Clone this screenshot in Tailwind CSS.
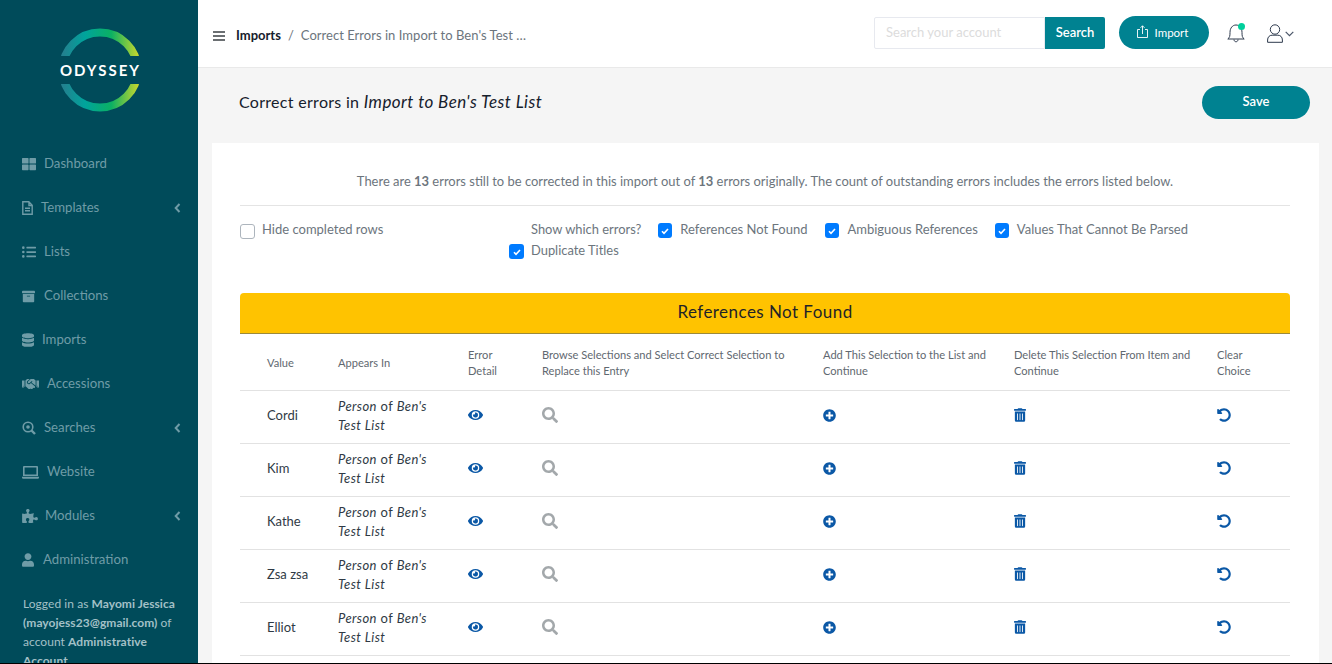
<!DOCTYPE html>
<html lang="en">
<head>
    <meta charset="UTF-8">
    <meta name="viewport" content="width=device-width, initial-scale=1.0">
    <title>Correct Errors</title>
    <script src="https://cdn.jsdelivr.net/npm/@tailwindcss/browser@4"></script>
</head>
<body class="bg-[#f5f5f5] font-['Lato',sans-serif] antialiased overflow-hidden">
<div class="flex flex-col h-[664px] w-[1332px] overflow-hidden">
<div class="flex flex-1 min-h-0">

    <!-- sidebar -->
    <aside class="w-[198px] shrink-0 bg-[#004b5a] h-full overflow-hidden text-[#6f9ca7] text-[13.2px]">
        <div class="h-[142px] flex justify-center">
            <svg class="mt-[28px] ml-[1px] h-[84px]" width="84" height="84" viewBox="0 0 84 84">
                <defs>
                    <linearGradient id="ring" x1="0" y1="0" x2="1" y2="0">
                        <stop offset="0" stop-color="#23808f"/>
                        <stop offset="0.3" stop-color="#00a49c"/>
                        <stop offset="0.65" stop-color="#0bb063"/>
                        <stop offset="1" stop-color="#c0d62f"/>
                    </linearGradient>
                    <clipPath id="cut"><path d="M0 0H84V28H0ZM0 56H84V84H0Z"/></clipPath>
                </defs>
                <circle cx="42" cy="42" r="37.500" fill="none" stroke="url(#ring)" stroke-width="8" clip-path="url(#cut)"/>
                <text x="42.500" y="47.500" text-anchor="middle" fill="#fff" font-size="15" font-weight="700" letter-spacing="2" font-family="Lato">ODYSSEY</text>
            </svg>
        </div>
        <nav>
            <a class="h-[44px] flex items-center pl-[22px] gap-[8px]"><svg class="w-[14px] h-[14px] fill-current" viewBox="0 0 512 512"><path d="M296 32h192c13.255 0 24 10.745 24 24v160c0 13.255-10.745 24-24 24H296c-13.255 0-24-10.745-24-24V56c0-13.255 10.745-24 24-24zm-80 0H24C10.745 32 0 42.745 0 56v160c0 13.255 10.745 24 24 24h192c13.255 0 24-10.745 24-24V56c0-13.255-10.745-24-24-24zM0 296v160c0 13.255 10.745 24 24 24h192c13.255 0 24-10.745 24-24V296c0-13.255-10.745-24-24-24H24c-13.255 0-24 10.745-24 24zm296 184h192c13.255 0 24-10.745 24-24V296c0-13.255-10.745-24-24-24H296c-13.255 0-24 10.745-24 24v160c0 13.255 10.745 24 24 24z"/></svg>Dashboard</a>
            <a class="h-[44px] flex items-center pl-[22px] gap-[8px] relative"><svg class="w-[11px] h-[14px]" viewBox="0 0 11 14" fill="none" stroke="currentColor" stroke-width="1.400"><path d="M.8.8h6l3.400 3.400v9H.8zM7 1v3.500h3.200M3 7.200h5M3 9.700h5"/></svg>Templates<svg class="absolute left-[174px] w-[7px] h-[10px]" viewBox="0 0 7 10" fill="none" stroke="currentColor" stroke-width="2"><path d="M5.500 1 1.700 5l3.800 4"/></svg></a>
            <a class="h-[44px] flex items-center pl-[22px] gap-[8px]"><svg class="w-[14px] h-[14px] fill-current" viewBox="0 0 512 512"><path d="M48 48a48 48 0 1 0 48 48 48 48 0 0 0-48-48zm0 160a48 48 0 1 0 48 48 48 48 0 0 0-48-48zm0 160a48 48 0 1 0 48 48 48 48 0 0 0-48-48zm448 16H176a16 16 0 0 0-16 16v32a16 16 0 0 0 16 16h320a16 16 0 0 0 16-16v-32a16 16 0 0 0-16-16zm0-320H176a16 16 0 0 0-16 16v32a16 16 0 0 0 16 16h320a16 16 0 0 0 16-16V80a16 16 0 0 0-16-16zm0 160H176a16 16 0 0 0-16 16v32a16 16 0 0 0 16 16h320a16 16 0 0 0 16-16v-32a16 16 0 0 0-16-16z"/></svg>Lists</a>
            <a class="h-[44px] flex items-center pl-[22px] gap-[9px]"><svg class="w-[13px] h-[13px] fill-current" viewBox="0 0 512 512"><path d="M32 448c0 17.700 14.300 32 32 32h384c17.700 0 32-14.300 32-32V160H32v288zm160-212c0-6.600 5.400-12 12-12h104c6.600 0 12 5.400 12 12v8c0 6.600-5.400 12-12 12H204c-6.600 0-12-5.400-12-12v-8zM480 32H32C14.300 32 0 46.300 0 64v48c0 8.800 7.200 16 16 16h480c8.800 0 16-7.200 16-16V64c0-17.700-14.300-32-32-32z"/></svg>Collections</a>
            <a class="h-[44px] flex items-center pl-[22px] gap-[8px]"><svg class="w-[12px] h-[14px] fill-current" viewBox="0 0 448 512"><path d="M448 73.143v45.714C448 159.143 347.667 192 224 192S0 159.143 0 118.857V73.143C0 32.857 100.333 0 224 0s224 32.857 224 73.143zM448 176v102.857C448 319.143 347.667 352 224 352S0 319.143 0 278.857V176c48.125 33.143 136.208 48.572 224 48.572S399.874 209.143 448 176zm0 160v102.857C448 479.143 347.667 512 224 512S0 479.143 0 438.857V336c48.125 33.143 136.208 48.572 224 48.572S399.874 369.143 448 336z"/></svg>Imports</a>
            <a class="h-[44px] flex items-center pl-[22px] gap-[8px]"><svg class="w-[17px] h-[14px] fill-current" viewBox="0 0 640 512"><path d="M434.700 64h-85.900c-8 0-15.700 3-21.600 8.400l-98.300 90c-.1.100-.2.300-.3.400-16.600 15.600-16.300 40.500-2.100 56 12.700 13.900 39.400 17.600 56.100 2.700.1-.1.300-.1.400-.2l79.900-73.200c6.500-5.900 16.700-5.500 22.600 1 6 6.500 5.500 16.600-1 22.600l-26.100 23.900L504 313.800c2.900 2.400 5.500 5 7.900 7.700V128l-54.600-54.600c-5.900-6-14.100-9.400-22.600-9.400zM544 128.200v223.900c0 17.700 14.300 32 32 32h64V128.200h-96zm48 223.900c-8.800 0-16-7.200-16-16s7.200-16 16-16 16 7.200 16 16-7.200 16-16 16zM0 384h64c17.700 0 32-14.300 32-32V128.200H0V384zm48-63.900c8.800 0 16 7.200 16 16s-7.200 16-16 16-16-7.200-16-16c0-8.900 7.200-16 16-16zm435.900 18.600L334.600 217.500l-30 27.500c-29.700 27.100-75.200 24.500-101.700-4.400-26.900-29.400-24.800-74.900 4.400-101.700L289.100 64h-83.800c-8.500 0-16.600 3.400-22.600 9.400L128 128v223.900h18.300l90.500 81.900c27.400 22.300 67.700 18.100 90-9.300l.2-.2 17.900 15.500c15.900 13 39.400 10.500 52.300-5.400l31.400-38.600 5.400 4.400c13.700 11.100 33.900 9.100 45-4.700l9.500-11.700c11.200-13.800 9.100-33.900-4.600-45.100z"/></svg>Accessions</a>
            <a class="h-[44px] flex items-center pl-[22px] gap-[8px] relative"><svg class="w-[14px] h-[14px]" viewBox="0 0 14 14" fill="none" stroke="currentColor"><circle cx="6" cy="6" r="4.800" stroke-width="1.600"/><circle cx="6" cy="6" r="1.800" fill="currentColor" stroke="none"/><path d="m9.500 9.500 3.500 3.500" stroke-width="2.400"/></svg>Searches<svg class="absolute left-[174px] w-[7px] h-[10px]" viewBox="0 0 7 10" fill="none" stroke="currentColor" stroke-width="2"><path d="M5.500 1 1.700 5l3.800 4"/></svg></a>
            <a class="h-[44px] flex items-center pl-[22px] gap-[8px]"><svg class="w-[17px] h-[13px]" viewBox="0 0 17 13"><path fill="currentColor" d="M2 0h13a1 1 0 0 1 1 1v9H1V1a1 1 0 0 1 1-1zm.6 1.600v6.800h11.800V1.600zM0 10.800h17v.7a1.300 1.300 0 0 1-1.300 1.300H1.300A1.300 1.300 0 0 1 0 11.500z"/></svg>Website</a>
            <a class="h-[44px] flex items-center pl-[22px] gap-[7px] relative"><svg class="w-[16px] h-[14px] fill-current" viewBox="0 0 576 512"><path d="M519.442 288.651c-41.519 0-59.5 31.593-82.058 31.593C377.409 320.244 432 144 432 144s-196.288 80-196.288-3.297c0-35.827 36.288-46.25 36.288-85.985C272 19.216 243.885 0 210.539 0c-34.654 0-66.366 18.891-66.366 56.346 0 41.364 31.711 59.277 31.711 81.75C175.885 207.719 0 166.758 0 166.758v333.237s178.635 41.047 178.635-28.662c0-22.473-40-40.107-40-81.471 0-37.456 29.25-56.346 63.577-56.346 33.673 0 61.788 19.216 61.788 54.717 0 39.735-36.288 50.158-36.288 85.985 0 60.803 129.675 25.73 181.23 25.73 0 0-34.725-120.101 25.827-120.101 35.962 0 46.423 36.152 86.308 36.152C556.712 416 576 387.99 576 354.443c0-34.199-18.962-65.792-56.558-65.792z"/></svg>Modules<svg class="absolute left-[174px] w-[7px] h-[10px]" viewBox="0 0 7 10" fill="none" stroke="currentColor" stroke-width="2"><path d="M5.500 1 1.700 5l3.800 4"/></svg></a>
            <a class="h-[44px] flex items-center pl-[22px] gap-[9px]"><svg class="w-[12px] h-[14px] fill-current" viewBox="0 0 448 512"><path d="M224 256c70.700 0 128-57.300 128-128S294.700 0 224 0 96 57.300 96 128s57.300 128 128 128zm89.600 32h-16.700c-22.200 10.200-46.900 16-72.900 16s-50.600-5.800-72.900-16h-16.700C60.200 288 0 348.200 0 422.400V464c0 26.500 21.500 48 48 48h352c26.500 0 48-21.500 48-48v-41.600c0-74.200-60.200-134.400-134.400-134.400z"/></svg>Administration</a>
        </nav>
        <p class="mt-[12px] pl-[23px] pr-[18px] text-[12px] leading-[19px] tracking-[0.05px] text-[#a3c0c7]">Logged in as <b>Mayomi Jessica (mayojess23@gmail.com)</b> of account <b>Administrative Account</b></p>
    </aside>

    <!-- main -->
    <div class="flex-1 min-w-0">
        <header class="h-[68px] bg-white border-b border-[#e9e9e9] flex items-center pl-[15px]">
            <svg class="w-[12px] h-[12px] mt-[5px] text-[#6b6f72]" viewBox="0 0 12 12" fill="currentColor"><path d="M0 1h12v2H0zM0 5h12v2H0zM0 9h12v2H0z"/></svg>
            <span class="ml-[11px] mt-[4px] text-[13px] font-bold text-[#16202c]">Imports</span>
            <span class="ml-[7px] mt-[4px] text-[13px] text-[#6c757d]">/</span>
            <span class="ml-[7px] mt-[4px] text-[13px] text-[#6c757d] tracking-[0.03px]">Correct Errors in Import to Ben's Test …</span>
            <div class="ml-auto flex h-[32px] w-[231px] mt-[-2px]">
                <div class="w-[171px] border border-[#e7e9ef] rounded-l-[2px] pl-[11px] text-[13px] leading-[29px] text-[#dcdcdc]">Search your account</div>
                <button class="w-[60px] bg-[#008291] rounded-r-[2px] text-white text-[13px] font-semibold">Search</button>
            </div>
            <button class="ml-[14px] w-[90px] h-[33px] mt-[-2px] pr-[3px] rounded-full bg-[#008291] text-white text-[11.500px] flex items-center justify-center gap-[7px]">
                <svg class="w-[11px] h-[13px] mt-[-3px]" viewBox="0 0 11 13" fill="none" stroke="currentColor" stroke-width=".9"><path d="M3 4.500H.5v8h10v-8H8M5.500 9V.8M3.500 2.800l2-2 2 2"/></svg>Import
            </button>
            <div class="relative ml-[18px] w-[18px] h-[20px] mt-[-2px]">
                <svg class="w-[18px] h-[20px] text-[#2e3a4d]" viewBox="0 0 18 20" fill="none" stroke="currentColor" stroke-width="1"><path d="M.8 16c2-1.500 2.200-3 2.200-6.500C3 5 5.500 2 9 2s6 3 6 7.500c0 3.500.2 5 2.200 6.500zM7 16.500c0 3 4 3 4 0"/></svg>
                <span class="absolute right-[0px] top-[0px] w-[7px] h-[7px] rounded-full bg-[#00cf9c]"></span>
            </div>
            <svg class="ml-[22px] mt-[-1px] w-[16px] h-[19px] text-[#2e3a4d]" viewBox="0 0 16 19" fill="none" stroke="currentColor" stroke-width="1"><circle cx="8" cy="5.500" r="4.700"/><path d="M.6 18.300v-2.300c0-3 2-4.800 4.500-4.800h5.800c2.500 0 4.500 1.800 4.500 4.800v2.300z"/></svg>
            <svg class="ml-[2px] mr-[38px] w-[9px] h-[6px] text-[#4a5568]" viewBox="0 0 9 6" fill="none" stroke="currentColor" stroke-width="1.200"><path d="m.7.800 3.800 3.800L8.300.8"/></svg>
        </header>

        <div class="h-[75px] flex items-center justify-between pl-[41px] pr-[22px] pb-[7px]">
            <h1 class="text-[16px] text-[#16202c] tracking-[0.3px]">Correct errors in <i class="text-[17px] tracking-[0.44px]">Import to Ben's Test List</i></h1>
            <button class="w-[108px] h-[33px] rounded-full bg-[#008291] text-white text-[13px] font-semibold">Save</button>
        </div>

        <main class="ml-[14px] mr-[13px] bg-white pl-[28px] pr-[29px] h-[520px] overflow-hidden">
            <p class="h-[63px] border-b border-[#e4e4e4] flex items-center justify-center text-[12.950px] text-[#6c757d] pt-[15px]"><span>There are <b>13</b> errors still to be corrected in this import out of <b>13</b> errors originally. The count of outstanding errors includes the errors listed below.</span></p>

            <div class="flex h-[87px] text-[12.900px] text-[#6c757d]">
                <label class="w-[269px] flex items-start gap-[7px] pt-[16px] leading-[15px] text-[13px]">
                    <span class="mt-[2px] w-[15px] h-[15px] rounded-[3px] border border-[#adb5bd] bg-white"></span>Hide completed rows
                </label>
                <div class="flex-1 flex flex-wrap content-start pt-[13px] leading-[21px]">
                    <span class="ml-[22px] mr-[17px]">Show which errors?</span>
                    <label class="flex items-start gap-[8px] mr-[18px] text-[13px]">
                        <span class="mt-[4px] w-[14px] h-[15px] rounded-[3px] bg-[#007bff] flex items-center justify-center"><svg class="w-[8px] h-[8px]" viewBox="0 0 8 8" fill="none" stroke="#fff" stroke-width="1.600"><path d="m1 4.300 2 2 4-4.300"/></svg></span>References Not Found
                    </label>
                    <label class="flex items-start gap-[8px] mr-[17px] text-[13px]">
                        <span class="mt-[4px] w-[14px] h-[15px] rounded-[3px] bg-[#007bff] flex items-center justify-center"><svg class="w-[8px] h-[8px]" viewBox="0 0 8 8" fill="none" stroke="#fff" stroke-width="1.600"><path d="m1 4.300 2 2 4-4.300"/></svg></span>Ambiguous References
                    </label>
                    <label class="flex items-start gap-[8px] text-[13px]">
                        <span class="mt-[4px] w-[14px] h-[15px] rounded-[3px] bg-[#007bff] flex items-center justify-center"><svg class="w-[8px] h-[8px]" viewBox="0 0 8 8" fill="none" stroke="#fff" stroke-width="1.600"><path d="m1 4.300 2 2 4-4.300"/></svg></span>Values That Cannot Be Parsed
                    </label>
                    <label class="flex items-start gap-[7px]">
                        <span class="mt-[4px] w-[15px] h-[15px] rounded-[3px] bg-[#007bff] flex items-center justify-center"><svg class="w-[8px] h-[8px]" viewBox="0 0 8 8" fill="none" stroke="#fff" stroke-width="1.600"><path d="m1 4.300 2 2 4-4.300"/></svg></span>Duplicate Titles
                    </label>
                </div>
            </div>

            <div class="h-[41px] pb-[2px] bg-[#ffc300] rounded-t-[4px] border-b border-[#9c8a3a] flex items-center justify-center text-[17px] text-[#1f2328] tracking-[0.45px]">References Not Found</div>

            <table class="w-[1050px] table-fixed text-left">
                <thead>
                    <tr class="h-[56px] border-b border-[#e2e2e2] text-[11.100px] leading-[16px] text-[#5f6870] align-middle">
                        <th class="w-[98px] pl-[27px] pt-[2px] font-normal">Value</th>
                        <th class="w-[130px] pt-[2px] font-normal">Appears In</th>
                        <th class="w-[74px] pt-[2px] font-normal">Error<br>Detail</th>
                        <th class="w-[281px] pt-[2px] font-normal pr-[25px]">Browse Selections and Select Correct Selection to Replace this Entry</th>
                        <th class="w-[191px] pt-[2px] font-normal pr-[20px]">Add This Selection to the List and Continue</th>
                        <th class="w-[203px] pt-[2px] font-normal pr-[16px]">Delete This Selection From Item and Continue</th>
                        <th class="pt-[2px] font-normal pr-[30px]">Clear Choice</th>
                    </tr>
                </thead>
                <tbody id="rows" class="text-[13px] text-[#2f3a45]"></tbody>
            </table>
        </main>
    </div>
</div>
<div class="h-px bg-black shrink-0"></div>
</div>

<script>
    const rowsBody = document.getElementById('rows');
    const values = ['Cordi', 'Kim', 'Kathe', 'Zsa zsa', 'Elliot'];

    rowsBody.innerHTML = values.map(value => `
        <tr class="h-[53px] border-b border-[#e2e2e2]">
            <td class="pl-[27px] pb-[1px]">${value}</td>
            <td class="leading-[19px] pb-[1px] tracking-[0.4px]"><i>Person</i> of <i>Ben's</i><br><i>Test List</i></td>
            <td class="pb-[3px]"><svg class="w-[15px] h-[14px] text-[#0b58a6] fill-current" viewBox="0 0 576 512"><path d="M572.52 241.4C518.29 135.59 410.93 64 288 64S57.68 135.64 3.48 241.41a32.35 32.35 0 0 0 0 29.19C57.71 376.41 165.07 448 288 448s230.32-71.64 284.52-177.41a32.35 32.35 0 0 0 0-29.19zM288 400a144 144 0 1 1 144-144 143.93 143.93 0 0 1-144 144zm0-240a95.31 95.31 0 0 0-25.31 3.79 47.85 47.85 0 0 1-66.9 66.9A95.78 95.78 0 1 0 288 160z"/></svg></td>
            <td class="pb-[3px]"><svg class="w-[16px] h-[16px] text-[#a3a8ab] fill-current" viewBox="0 0 512 512"><path d="M505 442.7L405.3 343c-4.5-4.5-10.6-7-17-7H372c27.6-35.3 44-79.7 44-128C416 93.1 322.9 0 208 0S0 93.1 0 208s93.1 208 208 208c48.3 0 92.7-16.4 128-44v16.3c0 6.4 2.5 12.5 7 17l99.7 99.7c9.4 9.4 24.6 9.4 33.9 0l28.3-28.3c9.4-9.4 9.4-24.6.1-34zM208 336c-70.7 0-128-57.2-128-128 0-70.7 57.2-128 128-128 70.7 0 128 57.2 128 128 0 70.7-57.2 128-128 128z"/></svg></td>
            <td class="pb-[3px]"><svg class="w-[13px] h-[13px] text-[#0b58a6] fill-current" viewBox="0 0 512 512"><path d="M256 8C119 8 8 119 8 256s111 248 248 248 248-111 248-248S393 8 256 8zm144 276c0 6.6-5.4 12-12 12h-92v92c0 6.6-5.4 12-12 12h-56c-6.6 0-12-5.4-12-12v-92h-92c-6.6 0-12-5.4-12-12v-56c0-6.6 5.4-12 12-12h92v-92c0-6.6 5.4-12 12-12h56c6.6 0 12 5.4 12 12v92h92c6.6 0 12 5.4 12 12v56z"/></svg></td>
            <td class="pb-[3px]"><svg class="w-[12px] h-[14px] text-[#0b58a6] fill-current" viewBox="0 0 448 512"><path d="M32 464a48 48 0 0 0 48 48h288a48 48 0 0 0 48-48V128H32zm272-256a16 16 0 0 1 32 0v224a16 16 0 0 1-32 0zm-96 0a16 16 0 0 1 32 0v224a16 16 0 0 1-32 0zm-96 0a16 16 0 0 1 32 0v224a16 16 0 0 1-32 0zM432 32H312l-9.4-18.7A24 24 0 0 0 281.1 0H166.8a23.72 23.72 0 0 0-21.4 13.3L136 32H16A16 16 0 0 0 0 48v32a16 16 0 0 0 16 16h416a16 16 0 0 0 16-16V48a16 16 0 0 0-16-16z"/></svg></td>
            <td class="pb-[3px]"><svg class="w-[14px] h-[14px] text-[#0b58a6] fill-current" viewBox="0 0 512 512"><path d="M255.545 8c-66.269.119-126.438 26.233-170.86 68.685L48.971 40.971C33.851 25.851 8 36.559 8 57.941V192c0 13.255 10.745 24 24 24h134.059c21.382 0 32.09-25.851 16.971-40.971l-41.75-41.75c30.864-28.899 70.801-44.907 113.23-45.273 92.398-.798 170.283 73.977 169.484 169.442C423.236 348.009 349.816 424 256 424c-41.127 0-79.997-14.678-110.63-41.556-4.743-4.161-11.906-3.908-16.368.553L89.34 422.659c-4.872 4.872-4.631 12.815.482 17.433C133.798 479.813 192.074 504 256 504c136.966 0 247.999-111.033 248-247.998C504.001 119.193 392.354 7.755 255.545 8z"/></svg></td>
        </tr>`).join('');
</script>
</body>
</html>
